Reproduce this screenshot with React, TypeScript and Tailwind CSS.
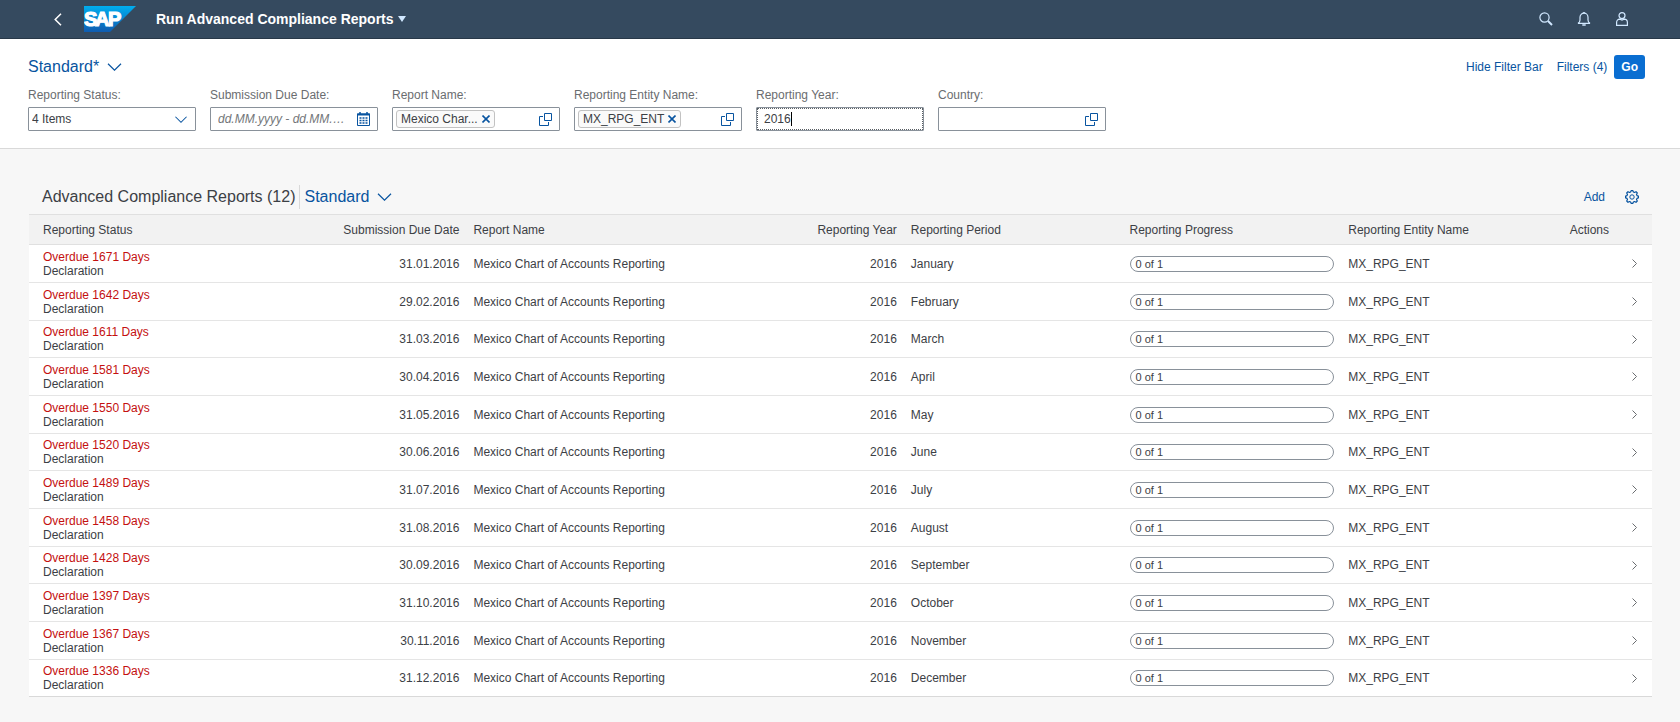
import React from "react";

const MONTHS = [
  { days: 1671, due: "31.01.2016", period: "January" },
  { days: 1642, due: "29.02.2016", period: "February" },
  { days: 1611, due: "31.03.2016", period: "March" },
  { days: 1581, due: "30.04.2016", period: "April" },
  { days: 1550, due: "31.05.2016", period: "May" },
  { days: 1520, due: "30.06.2016", period: "June" },
  { days: 1489, due: "31.07.2016", period: "July" },
  { days: 1458, due: "31.08.2016", period: "August" },
  { days: 1428, due: "30.09.2016", period: "September" },
  { days: 1397, due: "31.10.2016", period: "October" },
  { days: 1367, due: "30.11.2016", period: "November" },
  { days: 1336, due: "31.12.2016", period: "December" },
];

const ChevronDown = ({ className }: { className?: string }) => (
  <svg viewBox="0 0 14 8" className={className} fill="none" stroke="currentColor">
    <path d="M.5.8 7 7.2 13.5.8" strokeWidth="1.2" />
  </svg>
);

const SapLogo = () => (
  <svg viewBox="0 0 52 26" className="h-[26px] w-[52px]" aria-label="SAP">
    <defs>
      <linearGradient id="sapFill" x1="0" y1="0" x2="0" y2="1">
        <stop offset="0" stopColor="#00aeef" />
        <stop offset="1" stopColor="#0f5cb0" />
      </linearGradient>
    </defs>
    <path d="M0 0h52L26 26H0z" fill="url(#sapFill)" />
    <g
      fill="#fff"
      stroke="#fff"
      strokeWidth="1.2"
      fontFamily="Liberation Sans, sans-serif"
      fontWeight="700"
      fontSize="20"
    >
      <text x="0" y="20">S</text>
      <text x="11" y="20">A</text>
      <text x="24" y="20">P</text>
    </g>
  </svg>
);

const SearchIcon = () => (
  <svg viewBox="0 0 14 14" className="size-[14px]" fill="none" stroke="currentColor">
    <circle cx="5.5" cy="5.5" r="4.6" strokeWidth="1.2" />
    <path d="m9 9 4 4" strokeWidth="2" />
  </svg>
);

const BellIcon = () => (
  <svg viewBox="0 0 14 14" className="size-[14px]" fill="none" stroke="currentColor" strokeWidth="1.2">
    <path d="M1 11.4c1.5-.8 2-1.8 2-3.4V5.2a4 4 0 0 1 8 0V8c0 1.6.5 2.6 2 3.4z" />
    <path d="M7 0v1.5M5.3 13h3.4" strokeWidth="1.6" />
  </svg>
);

const PersonIcon = () => (
  <svg viewBox="0 0 14 14" className="size-[14px]" fill="none" stroke="currentColor" strokeWidth="1.2">
    <circle cx="7" cy="3.6" r="3" />
    <path d="M1.6 13.4v-3c0-2 1.2-3.2 3.2-3.2l2.2.8 2.2-.8c2 0 3.2 1.2 3.2 3.2v3z" />
  </svg>
);

const ValueHelpIcon = () => (
  <svg viewBox="0 0 13 13" className="size-[13px]" fill="none" stroke="currentColor">
    <path d="M5.5.5h7v7h-7zM4 3.5H.5v9h9V9" />
  </svg>
);

const CalendarIcon = () => (
  <svg viewBox="0 0 13 14" className="h-[14px] w-[13px]" fill="none" stroke="currentColor">
    <path d="M.5 2h12v11.5H.5z" />
    <path d="M0 2.5h13" strokeWidth="2" />
    <path d="M3 0v3M10 0v3" strokeWidth="1.5" />
    <path d="M2.500 6h8M2.500 8.500h8M2.500 11h8" strokeWidth="1.5" strokeDasharray="2 1" />
  </svg>
);

const GearIcon = () => (
  <svg viewBox="0 0 14 14" className="size-[14px]" fill="none" stroke="currentColor" strokeLinejoin="round">
    <path
      strokeWidth="1.2"
      d="M5.6 2 6.1.6h1.800L8.400 2l1.100.5 1.500-.8L12.300 3l-.8 1.500.5 1.100 1.400.5v1.800l-1.400.5-.5 1.100.8 1.500-1.300 1.300-1.500-.8-1.100.5-.5 1.400H6.100L5.600 12l-1.100-.5-1.500.8L1.700 11l.8-1.500L2 8.400.6 7.900V6.100L2 5.600l.5-1.100L1.700 3 3 1.700l1.500.8z"
    />
    <circle cx="7" cy="7" r="2.2" />
  </svg>
);

const Field = ({ id, label, children }: { id: string; label: string; children: React.ReactNode }) => (
  <div className="w-[168px]">
    <label htmlFor={id} className="block leading-4 text-[#6a6d70]">
      {label}
    </label>
    <div className="relative mt-1 flex h-6 items-center rounded-[1px] border border-[#89919a] bg-white">
      {children}
    </div>
  </div>
);

const Token = ({ text }: { text: string }) => (
  <span className="ml-[3px] flex h-[18px] shrink-0 items-center gap-1 rounded-[3px] border border-[#c2c2c2] bg-[#fafafa] px-1">
    {text}
    <button type="button" aria-label={`Remove ${text}`} className="text-[#0854a0]">
      <svg viewBox="0 0 8 8" className="size-2" stroke="currentColor" strokeWidth="1.6">
        <path d="m.5.5 7 7M7.5.5l-7 7" />
      </svg>
    </button>
  </span>
);

const ValueHelp = ({ label }: { label: string }) => (
  <button type="button" aria-label={label} className="mr-[7px] shrink-0 text-[#0854a0]">
    <ValueHelpIcon />
  </button>
);

const ShellBar = () => (
  <header className="flex h-[39px] items-center border-b border-[#283848] bg-[#354a5f] pr-[51px] pl-[54px] text-white">
    <button type="button" aria-label="Back">
      <svg viewBox="0 0 8 13" className="h-[13px] w-2" fill="none" stroke="currentColor" strokeWidth="1.5">
        <path d="M7 .7 1.2 6.5 7 12.3" />
      </svg>
    </button>
    <div className="ml-[22px]">
      <SapLogo />
    </div>
    <button type="button" className="ml-5 flex items-center gap-1 text-sm font-bold">
      Run Advanced Compliance Reports
      <svg viewBox="0 0 8 6" className="h-1.5 w-2 text-[#d1e8ff]" fill="currentColor">
        <path d="M0 0h8L4 6z" />
      </svg>
    </button>
    <div className="ml-auto flex items-center gap-6 text-[#d1e8ff]">
      <button type="button" aria-label="Search"><SearchIcon /></button>
      <button type="button" aria-label="Notifications"><BellIcon /></button>
      <button type="button" aria-label="User"><PersonIcon /></button>
    </div>
  </header>
);

const FilterBar = () => (
  <section className="border-b border-[#d9d9d9] bg-white px-7 pt-4 pb-[17px]">
    <div className="flex h-6 items-center text-[#0854a0]">
      <button type="button" className="flex items-center gap-2 text-base">
        Standard*
        <ChevronDown className="h-2 w-[15px]" />
      </button>
      <div className="ml-auto flex items-center">
        <button type="button">Hide Filter Bar</button>
        <button type="button" className="ml-[14px]">Filters (4)</button>
        <button type="button" className="mr-[7px] ml-[7px] h-6 rounded-[3px] bg-[#0a6ed1] px-[7px] font-bold text-white">
          Go
        </button>
      </div>
    </div>
    <div className="mt-2 flex flex-wrap gap-[14px]">
      <Field id="status" label="Reporting Status:">
        <select id="status" className="h-full w-full appearance-none pl-[3px] outline-none">
          <option>4 Items</option>
        </select>
        <ChevronDown className="pointer-events-none absolute right-2 h-[7px] w-3 text-[#0854a0]" />
      </Field>
      <Field id="due" label="Submission Due Date:">
        <input
          id="due"
          placeholder="dd.MM.yyyy - dd.MM.yyyy"
          className="min-w-0 flex-1 text-ellipsis pl-[7px] outline-none placeholder:text-[#74777a] placeholder:italic"
        />
        <button type="button" aria-label="Open calendar" className="mr-[7px] ml-2 shrink-0 text-[#0854a0]">
          <CalendarIcon />
        </button>
      </Field>
      <Field id="report" label="Report Name:">
        <Token text="Mexico Char..." />
        <input id="report" className="min-w-0 flex-1 outline-none" />
        <ValueHelp label="Select report name" />
      </Field>
      <Field id="entity" label="Reporting Entity Name:">
        <Token text="MX_RPG_ENT" />
        <input id="entity" className="min-w-0 flex-1 outline-none" />
        <ValueHelp label="Select entity" />
      </Field>
      <Field id="year" label="Reporting Year:">
        <input
          id="year"
          defaultValue="2016"
          className="h-full w-full border border-dotted border-[#5a5f64] pl-1.5 caret-transparent outline-none"
        />
        <span className="absolute left-[34px] h-[14px] w-px bg-black" />
      </Field>
      <Field id="country" label="Country:">
        <input id="country" className="min-w-0 flex-1 pl-[7px] outline-none" />
        <ValueHelp label="Select country" />
      </Field>
    </div>
  </section>
);

const ReportsTable = () => (
  <table className="w-full table-fixed border-collapse">
    <colgroup>
      <col />
      <col />
      <col />
      <col />
      <col />
      <col />
      <col />
      <col className="w-14" />
      <col className="w-9" />
    </colgroup>
    <thead>
      <tr className="h-[30px] border-y border-[#e0e0e0] bg-[#f2f2f2] text-left *:px-[7px] *:font-normal">
        <th className="pl-[14px]!">Reporting Status</th>
        <th className="text-right">Submission Due Date</th>
        <th>Report Name</th>
        <th className="text-right">Reporting Year</th>
        <th>Reporting Period</th>
        <th>Reporting Progress</th>
        <th>Reporting Entity Name</th>
        <th className="text-right">Actions</th>
        <th />
      </tr>
    </thead>
    <tbody>
      {MONTHS.map((row) => (
        <tr
          key={row.period}
          className="h-[38px] border-b border-[#e5e5e5] bg-white *:px-[7px] last:border-[#d9d9d9] nth-[3n]:h-[37px]"
        >
          <td className="pl-[14px]! leading-[14px]">
            <div className="text-[#c41010]">Overdue {row.days} Days</div>
            <div>Declaration</div>
          </td>
          <td className="text-right">{row.due}</td>
          <td className="whitespace-nowrap">Mexico Chart of Accounts Reporting</td>
          <td className="text-right">2016</td>
          <td>{row.period}</td>
          <td>
            <div className="flex h-4 items-center rounded-full border border-[#89919a] pl-[5px] text-[11px] leading-[14px]">
              0 of 1
            </div>
          </td>
          <td>MX_RPG_ENT</td>
          <td />
          <td>
            <svg viewBox="0 0 5 9" className="mx-auto h-[9px] w-[5px] text-[#6a6d70]" fill="none" stroke="currentColor">
              <path d="m.5.5 4 4-4 4" />
            </svg>
          </td>
        </tr>
      ))}
    </tbody>
  </table>
);

export default function App() {
  return (
    <div className="min-h-screen bg-[#f7f7f7] font-['Liberation_Sans',Arial,sans-serif] text-xs text-[#3c4045]">
      <ShellBar />
      <FilterBar />
      <main className="pt-8 pr-7 pl-[29px]">
        <div className="mb-px flex h-8 items-center px-[13px]">
          <h1 className="border-r border-[#d9d9d9] pr-1 text-base">Advanced Compliance Reports (12)</h1>
          <button type="button" className="ml-1 flex items-center gap-2 text-base text-[#0854a0]">
            Standard
            <ChevronDown className="h-2 w-[15px]" />
          </button>
          <div className="ml-auto flex items-center gap-5 text-[#0854a0]">
            <button type="button">Add</button>
            <button type="button" aria-label="Settings"><GearIcon /></button>
          </div>
        </div>
        <ReportsTable />
      </main>
    </div>
  );
}
